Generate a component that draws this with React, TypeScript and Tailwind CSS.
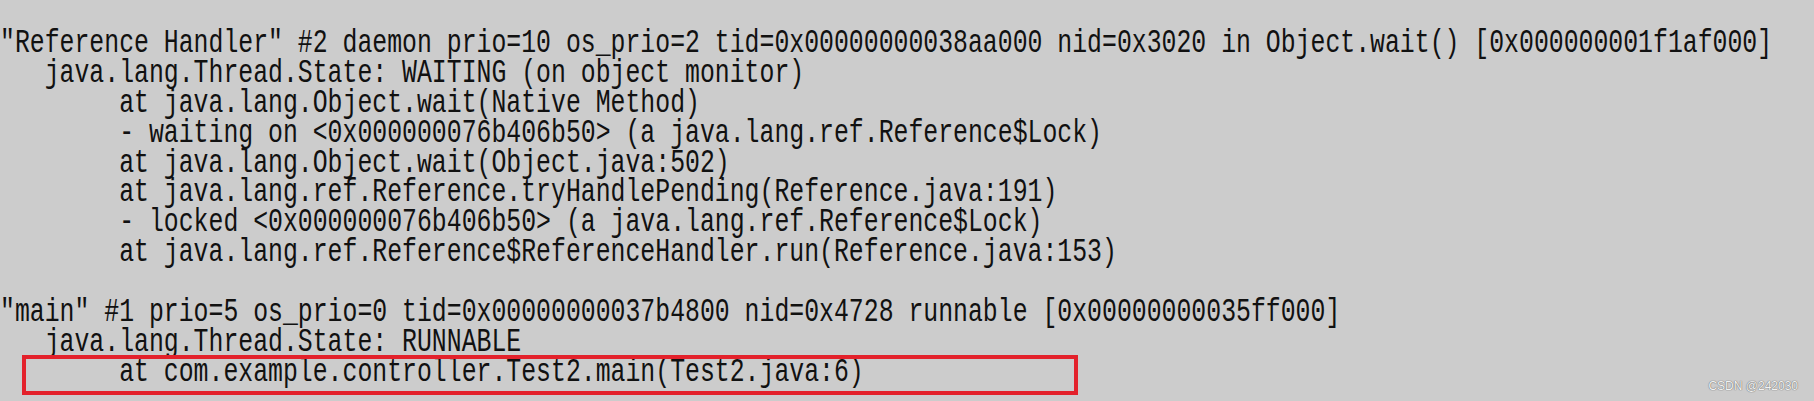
const lines = [
  '"Reference Handler" #2 daemon prio=10 os_prio=2 tid=0x00000000038aa000 nid=0x3020 in Object.wait() [0x000000001f1af000]',
  '   java.lang.Thread.State: WAITING (on object monitor)',
  '        at java.lang.Object.wait(Native Method)',
  '        - waiting on <0x000000076b406b50> (a java.lang.ref.Reference$Lock)',
  '        at java.lang.Object.wait(Object.java:502)',
  '        at java.lang.ref.Reference.tryHandlePending(Reference.java:191)',
  '        - locked <0x000000076b406b50> (a java.lang.ref.Reference$Lock)',
  '        at java.lang.ref.Reference$ReferenceHandler.run(Reference.java:153)',
  '',
  '"main" #1 prio=5 os_prio=0 tid=0x00000000037b4800 nid=0x4728 runnable [0x00000000035ff000]',
  '   java.lang.Thread.State: RUNNABLE',
  '        at com.example.controller.Test2.main(Test2.java:6)',
];

export default function App() {
  return (
    <div className="relative w-full h-[401px] overflow-hidden bg-[#cccccc] pt-[29px] text-[#111111]">
      {lines.map((line, i) => (
        <div
          key={i}
          className="h-[29.9px] whitespace-pre font-['Liberation_Mono',monospace] text-[33px] leading-[29.9px] origin-left scale-x-[0.752]"
        >
          {line || ' '}
        </div>
      ))}

      {/* highlight around the stack frame */}
      <div className="absolute left-[22px] top-[355px] w-[1056px] h-[40px] border-4 border-[#e3212b]" />

      <div className="absolute right-[16px] bottom-[9px] font-['Liberation_Sans',Arial,sans-serif] text-[12px] leading-none text-[#f2f2f2] [text-shadow:0_0_1px_#6b6b6b,0_0_1px_#6b6b6b]">
        CSDN @242030
      </div>
    </div>
  );
}
